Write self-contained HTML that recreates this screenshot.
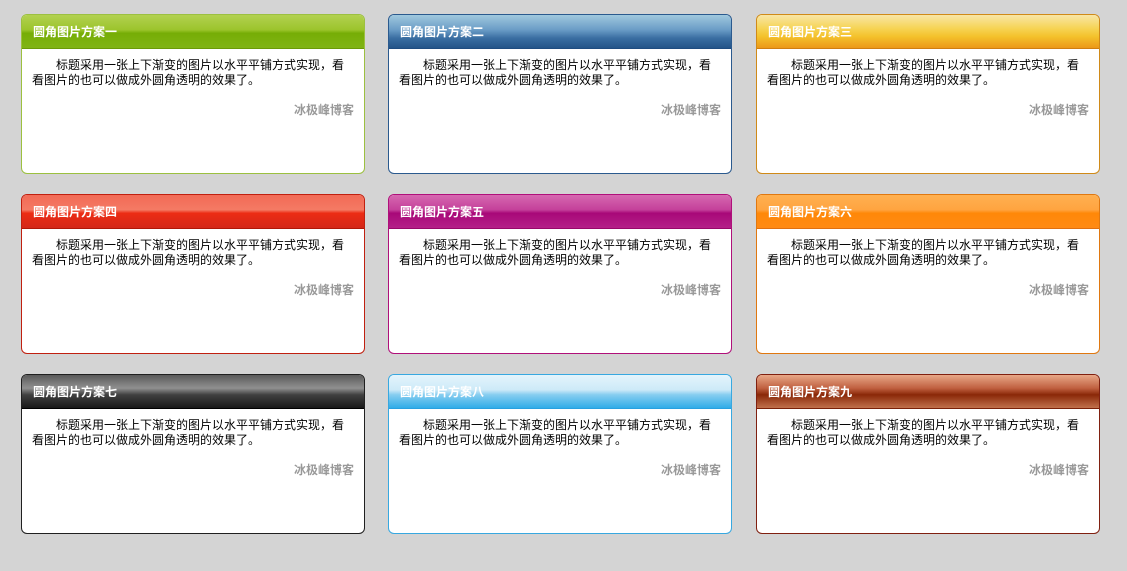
<!DOCTYPE html>
<html><head><meta charset="utf-8"><style>
body{margin:0;background:#d4d4d4;width:1127px;height:571px;position:relative;overflow:hidden;font-family:"Liberation Sans","Noto Sans CJK SC","WenQuanYi Zen Hei",sans-serif}
.b{position:absolute;width:342px;height:158px;background:#fff;border:1px solid;border-radius:6px;overflow:hidden}
.h{height:33px;border-bottom:1px solid;color:#fff;font-weight:bold;font-size:12px;line-height:34px;padding-left:11px}
.t{font-size:12px;line-height:15px;color:#000;padding:9px 10px 0 10px;text-indent:24px}
.s{text-align:right;font-size:12px;font-weight:bold;color:#999;padding:13px 10px 0 0}
</style></head><body>

<div class="b" style="left:21px;top:14px;border-color:#9cc040"><div class="h" style="border-color:#6b9a08;background:linear-gradient(#b2d150,#9cc42c 45%,#76ad06 55%,#80b414)">圆角图片方案一</div><div class="t">标题采用一张上下渐变的图片以水平平铺方式实现，看看图片的也可以做成外圆角透明的效果了。</div><div class="s">冰极峰博客</div></div>

<div class="b" style="left:388px;top:14px;border-color:#2b5a8e"><div class="h" style="border-color:#1f4c80;background:linear-gradient(#a0c8de,#6a9cc6 45%,#3a6ea2 70%,#245488)">圆角图片方案二</div><div class="t">标题采用一张上下渐变的图片以水平平铺方式实现，看看图片的也可以做成外圆角透明的效果了。</div><div class="s">冰极峰博客</div></div>

<div class="b" style="left:756px;top:14px;border-color:#d08a18"><div class="h" style="border-color:#d07e10;background:linear-gradient(#f8e6a6,#f6d456 40%,#f4c22c 65%,#ec9818)">圆角图片方案三</div><div class="t">标题采用一张上下渐变的图片以水平平铺方式实现，看看图片的也可以做成外圆角透明的效果了。</div><div class="s">冰极峰博客</div></div>

<div class="b" style="left:21px;top:194px;border-color:#c02010"><div class="h" style="border-color:#b01808;background:linear-gradient(#f26a56,#f47a64 45%,#ec2c14 55%,#d42818)">圆角图片方案四</div><div class="t">标题采用一张上下渐变的图片以水平平铺方式实现，看看图片的也可以做成外圆角透明的效果了。</div><div class="s">冰极峰博客</div></div>

<div class="b" style="left:388px;top:194px;border-color:#b0107a"><div class="h" style="border-color:#98086a;background:linear-gradient(#d668b0,#c4409a 45%,#a80878 55%,#b42088)">圆角图片方案五</div><div class="t">标题采用一张上下渐变的图片以水平平铺方式实现，看看图片的也可以做成外圆角透明的效果了。</div><div class="s">冰极峰博客</div></div>

<div class="b" style="left:756px;top:194px;border-color:#e07810"><div class="h" style="border-color:#e07010;background:linear-gradient(#ffb050,#ffa440 45%,#ff8808 55%,#ff8a14)">圆角图片方案六</div><div class="t">标题采用一张上下渐变的图片以水平平铺方式实现，看看图片的也可以做成外圆角透明的效果了。</div><div class="s">冰极峰博客</div></div>

<div class="b" style="left:21px;top:374px;border-color:#202020"><div class="h" style="border-color:#000;background:linear-gradient(#5a5a5a,#909090 40%,#404040 60%,#181818)">圆角图片方案七</div><div class="t">标题采用一张上下渐变的图片以水平平铺方式实现，看看图片的也可以做成外圆角透明的效果了。</div><div class="s">冰极峰博客</div></div>

<div class="b" style="left:388px;top:374px;border-color:#38a8e0"><div class="h" style="border-color:#28a0e0;background:linear-gradient(#e4f4fc,#cdeaf8 45%,#86cdf0 60%,#30ace8)">圆角图片方案八</div><div class="t">标题采用一张上下渐变的图片以水平平铺方式实现，看看图片的也可以做成外圆角透明的效果了。</div><div class="s">冰极峰博客</div></div>

<div class="b" style="left:756px;top:374px;border-color:#802010"><div class="h" style="border-color:#7a2008;background:linear-gradient(#e8a888,#c06040 40%,#8a2808 60%,#c0704c)">圆角图片方案九</div><div class="t">标题采用一张上下渐变的图片以水平平铺方式实现，看看图片的也可以做成外圆角透明的效果了。</div><div class="s">冰极峰博客</div></div>

</body></html>
